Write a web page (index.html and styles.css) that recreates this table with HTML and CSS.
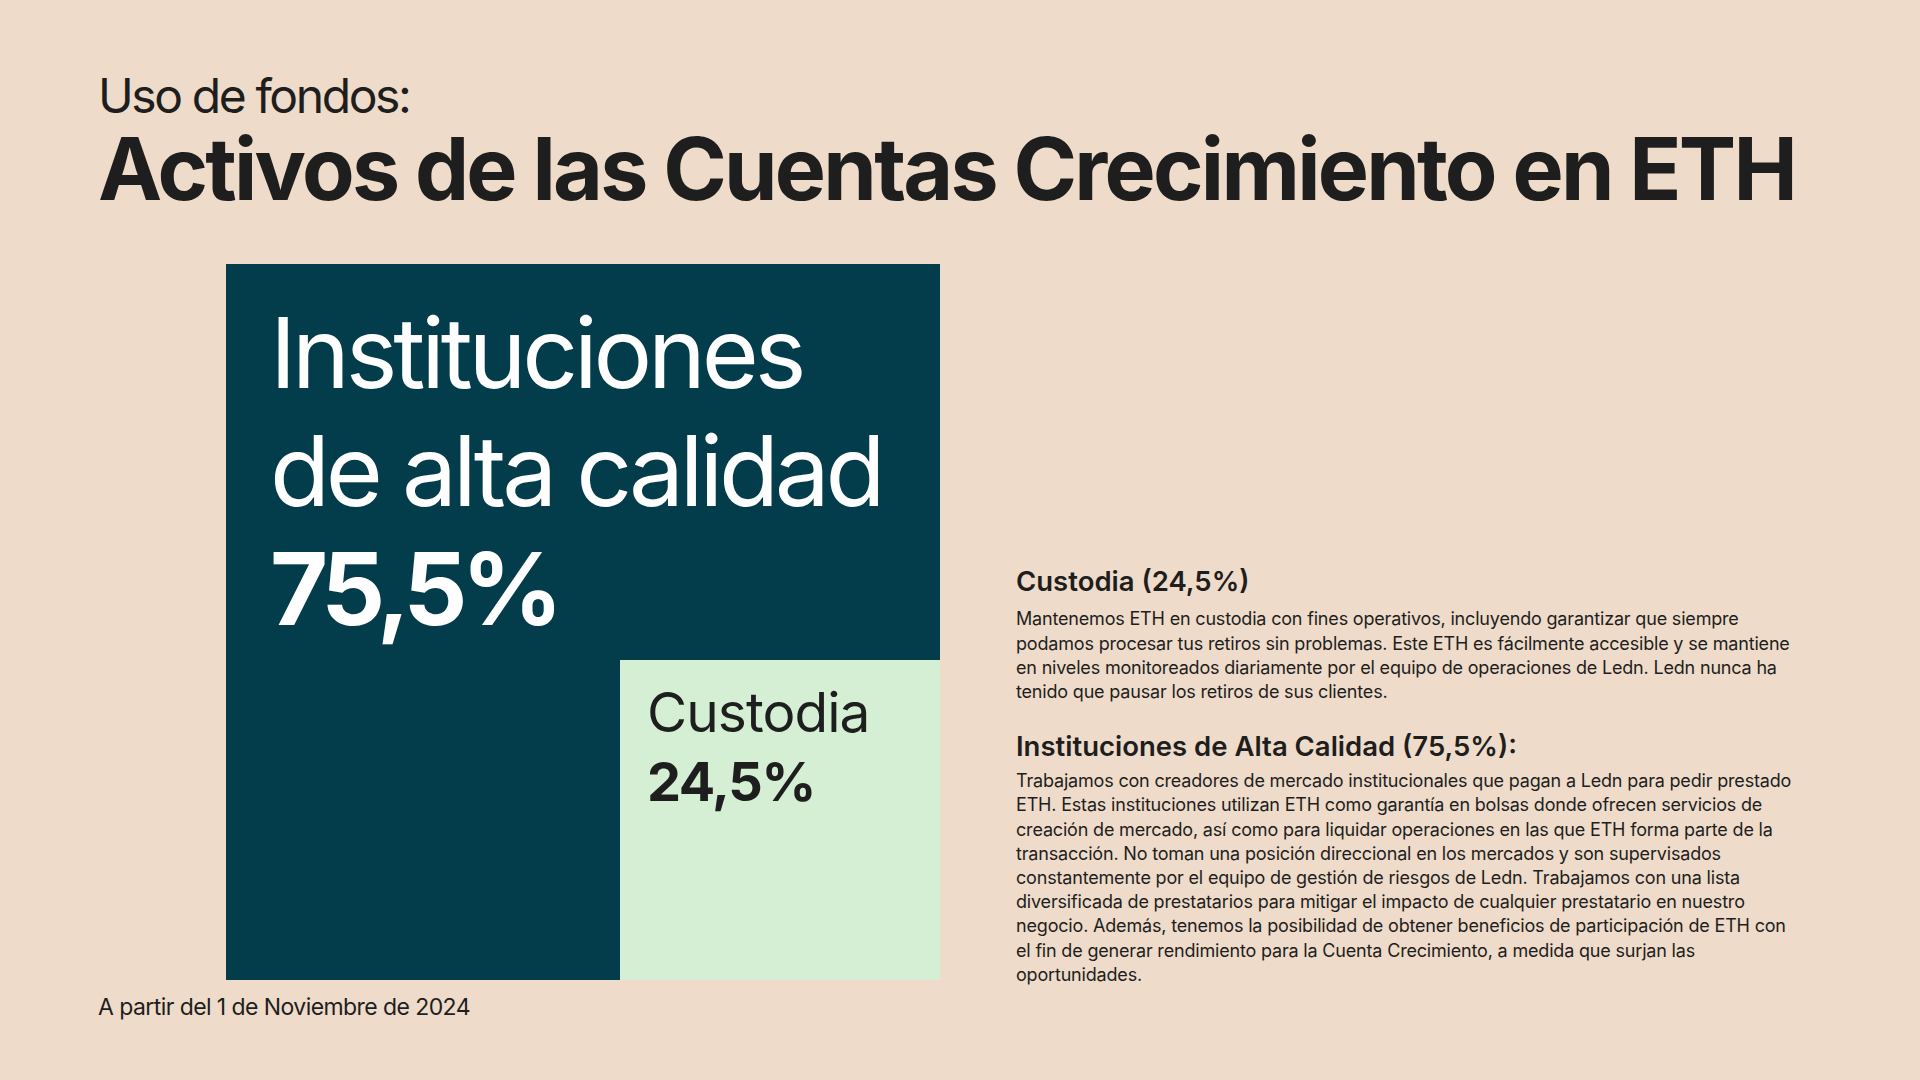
FILE: index.html
```html
<!DOCTYPE html>
<html lang="es">
<head>
<meta charset="utf-8">
<title>Uso de fondos: Activos de las Cuentas Crecimiento en ETH</title>
<link rel="stylesheet" href="styles.css">
</head>
<body>
<main class="slide">
  <header class="head">
    <p class="kicker">Uso de fondos:</p>
    <h1 class="title">Activos de las Cuentas Crecimiento en ETH</h1>
  </header>
  <section class="content">
    <div class="treemap">
      <div class="tile-main">
        <p class="tile-name">Instituciones<br>de alta calidad</p>
        <p class="tile-value">75,5%</p>
      </div>
      <div class="tile-custody">
        <p class="tile-name">Custodia</p>
        <p class="tile-value">24,5%</p>
      </div>
    </div>
    <div class="notes">
      <h2 class="note-title">Custodia (24,5%)</h2>
      <p class="note-text">Mantenemos ETH en custodia con fines operativos, incluyendo garantizar que siempre podamos procesar tus retiros sin problemas. Este ETH es fácilmente accesible y se mantiene en niveles monitoreados diariamente por el equipo de operaciones de Ledn. Ledn nunca ha tenido que pausar los retiros de sus clientes.</p>
      <h2 class="note-title note-title-second">Instituciones de Alta Calidad (75,5%):</h2>
      <p class="note-text note-text-second">Trabajamos con creadores de mercado institucionales que pagan a Ledn para pedir prestado ETH. Estas instituciones utilizan ETH como garantía en bolsas donde ofrecen servicios de creación de mercado, así como para liquidar operaciones en las que ETH forma parte de la transacción. No toman una posición direccional en los mercados y son supervisados constantemente por el equipo de gestión de riesgos de Ledn. Trabajamos con una lista diversificada de prestatarios para mitigar el impacto de cualquier prestatario en nuestro negocio. Además, tenemos la posibilidad de obtener beneficios de participación de ETH con el fin de generar rendimiento para la Cuenta Crecimiento, a medida que surjan las oportunidades.</p>
    </div>
  </section>
  <p class="footnote">A partir del 1 de Noviembre de 2024</p>
</main>
</body>
</html>
```

FILE: styles.css
```css
* { box-sizing: border-box; }

html, body {
  margin: 0;
  padding: 0;
}

body {
  width: 1920px;
  height: 1080px;
  overflow: hidden;
  background: #eedbc9;
  color: #1e1e1e;
  font-family: "Inter", "Noto Sans", "Liberation Sans", sans-serif;
}

.slide {
  padding: 72px 98px 0 98px;
}

.kicker {
  margin: 0;
  font-size: 48px;
  line-height: 48px;
  font-weight: 400;
  letter-spacing: -0.05em;
}

.title {
  margin: 6px 0 0 0;
  font-size: 86px;
  line-height: 86px;
  font-weight: 700;
  letter-spacing: -0.032em;
}

.content {
  display: flex;
  align-items: flex-start;
  margin-top: 52px;
}

.treemap {
  flex: none;
  margin-left: 128px;
  width: 714px;
  height: 716px;
  background: #033d4b;
  display: grid;
  grid-template-columns: 394px 320px;
  grid-template-rows: 396px 320px;
}

.tile-main {
  grid-column: 1 / 3;
  grid-row: 1;
  padding: 30px 0 0 44px;
  color: #ffffff;
}

.tile-main .tile-name {
  margin: 0;
  font-size: 98px;
  line-height: 118px;
  font-weight: 400;
  letter-spacing: -0.043em;
}

.tile-main .tile-value {
  margin: 0;
  font-size: 100px;
  line-height: 118px;
  font-weight: 700;
  letter-spacing: -0.06em;
}

.tile-custody {
  grid-column: 2;
  grid-row: 2;
  background: #d4efd4;
  padding: 18px 0 0 27px;
  color: #1e1e1e;
}

.tile-custody .tile-name {
  margin: 0;
  font-size: 55px;
  line-height: 69px;
  font-weight: 400;
  letter-spacing: -0.017em;
}

.tile-custody .tile-value {
  margin: 0;
  font-size: 54px;
  line-height: 69px;
  font-weight: 700;
  letter-spacing: -0.026em;
}

.notes {
  flex: none;
  width: 787px;
  margin-left: 76px;
  align-self: flex-end;
  margin-bottom: -7px;
}

.note-title {
  margin: 0;
  font-size: 27.5px;
  line-height: 34px;
  font-weight: 600;
  letter-spacing: 0;
}

.note-title-second {
  margin-top: 25px;
}

.note-text {
  margin: 9.5px 0 0 0;
  font-size: 18px;
  line-height: 24.2px;
  font-weight: 400;
  letter-spacing: -0.01em;
}

.note-text-second {
  margin-top: 6px;
}

.footnote {
  margin: 12.6px 0 0 0;
  font-size: 23px;
  line-height: 28px;
  font-weight: 400;
  letter-spacing: -0.025em;
}
```
